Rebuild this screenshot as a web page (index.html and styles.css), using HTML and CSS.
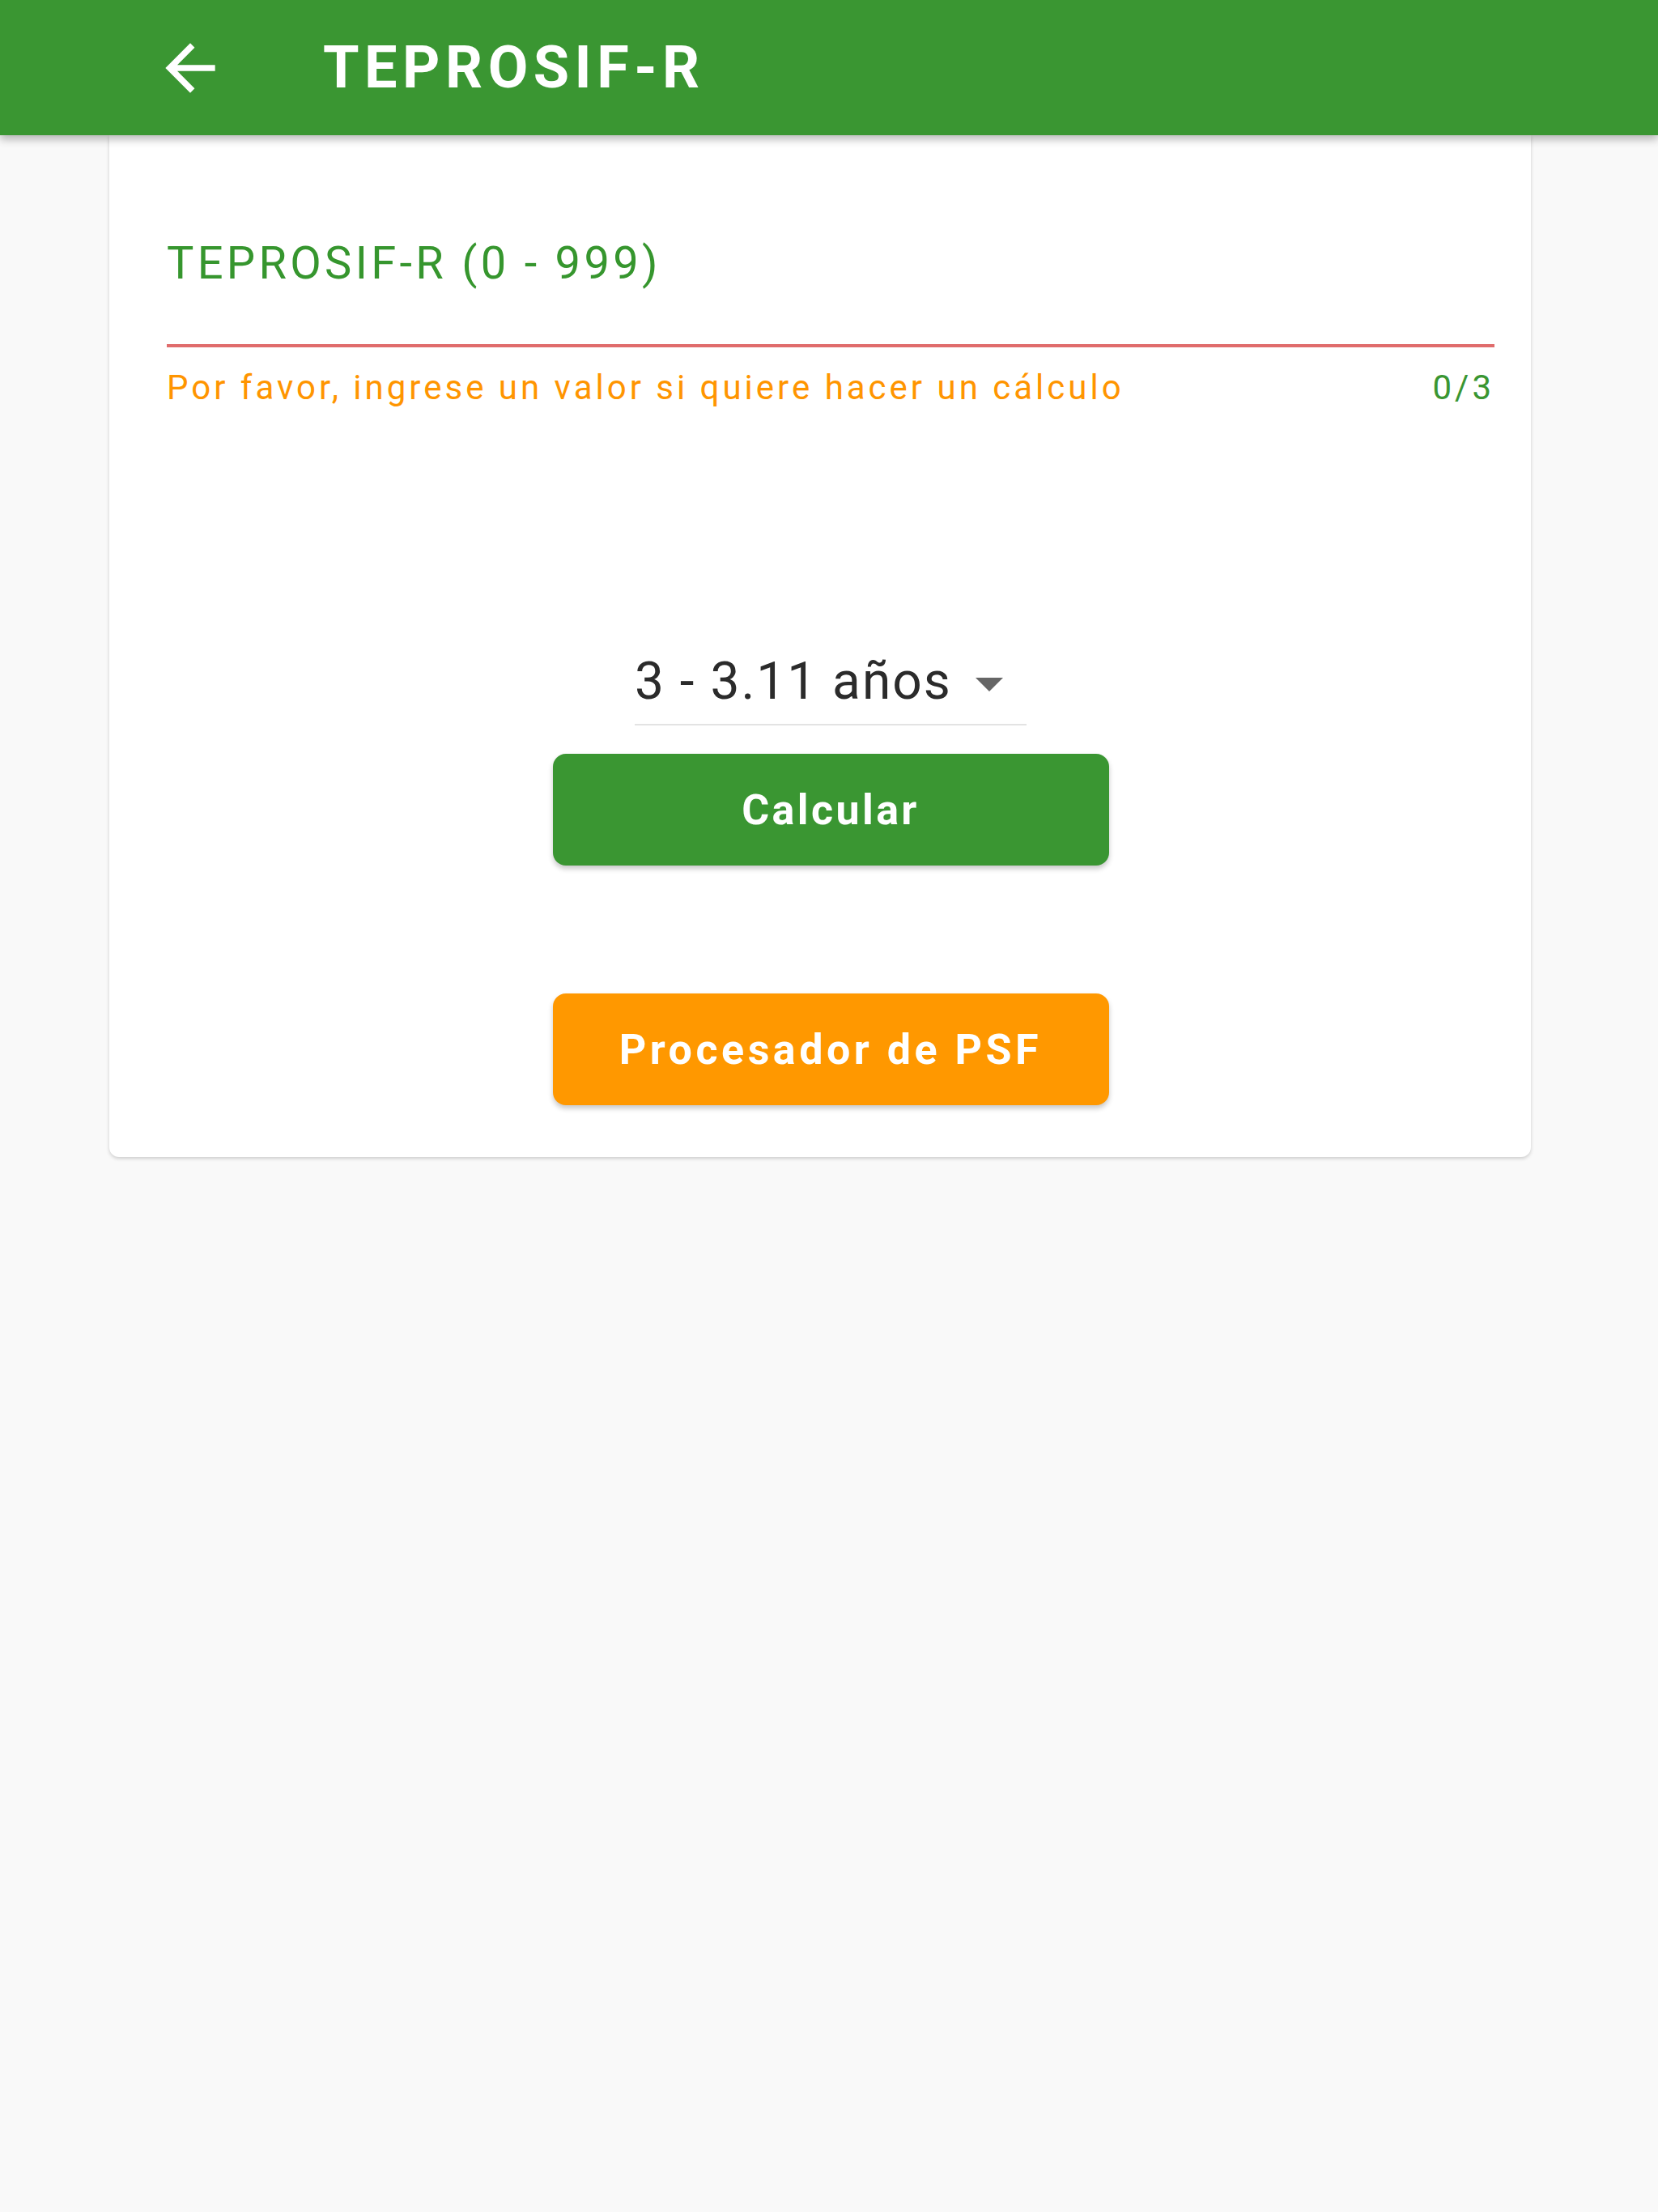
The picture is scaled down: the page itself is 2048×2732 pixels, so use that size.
FILE: index.html
```html
<!DOCTYPE html>
<html lang="es">
<head>
<meta charset="utf-8">
<title>TEPROSIF-R</title>
<link rel="stylesheet" href="styles.css">
</head>
<body>
<header class="appbar">
  <button class="back" aria-label="Volver">
    <svg viewBox="0 0 24 24" width="92" height="92"><path fill="#ffffff" d="M20 11H7.83l5.59-5.59L12 4l-8 8 8 8 1.41-1.41L7.83 13H20v-2z"/></svg>
  </button>
  <h1 class="title">TEPROSIF-R</h1>
</header>
<main class="card">
  <div class="field">
    <label class="field-label">TEPROSIF-R (0 - 999)</label>
    <div class="field-line"></div>
    <div class="field-help">
      <span class="help-text">Por favor, ingrese un valor si quiere hacer un cálculo</span>
      <span class="counter">0/3</span>
    </div>
  </div>
  <div class="actions">
    <div class="select">
      <span class="select-value">3 - 3.11 años</span>
      <span class="select-arrow"></span>
    </div>
    <button class="btn btn-green">Calcular</button>
    <button class="btn btn-orange btn-wide">Procesador de PSF</button>
  </div>
</main>
</body>
</html>
```

FILE: styles.css
```css
* { box-sizing: border-box; }
html, body {
  margin: 0;
  padding: 0;
  background: #f9f9f9;
  font-family: Roboto, "Liberation Sans", Arial, sans-serif;
  width: 2048px;
  min-height: 2732px;
}
.appbar {
  position: relative;
  z-index: 2;
  height: 167px;
  background: #3a9632;
  display: flex;
  align-items: center;
  padding-left: 189px;
  box-shadow: 0 5px 10px rgba(0,0,0,0.28);
}
.back {
  background: none;
  border: 0;
  padding: 0;
  width: 92px;
  height: 92px;
  display: flex;
}
.title {
  margin: 0 0 0 118px;
  color: #ffffff;
  font-weight: 700;
  font-size: 72px;
  line-height: 1;
  letter-spacing: 6.5px;
}
.card {
  position: relative;
  z-index: 1;
  margin-left: 135px;
  width: 1756px;
  background: #ffffff;
  border-radius: 0 0 12px 12px;
  box-shadow: 0 2px 4px rgba(0,0,0,0.18);
  padding: 125px 45px 64px 71px;
}
.field-label {
  display: block;
  color: #36962e;
  font-size: 56px;
  line-height: 67px;
  letter-spacing: 4.3px;
}
.field-line {
  margin-top: 66px;
  height: 4px;
  background: #e06c6c;
}
.field-help {
  margin-top: 25px;
  display: flex;
  justify-content: space-between;
  font-size: 42px;
  line-height: 50px;
  letter-spacing: 4px;
}
.help-text { color: #ff9500; }
.counter { color: #3a9632; }
.actions {
  margin-top: 300px;
  display: flex;
  flex-direction: column;
  align-items: center;
}
.select {
  width: 484px;
  display: flex;
  align-items: center;
  border-bottom: 2px solid #e3e3e3;
  padding-bottom: 14px;
}
.select-value {
  color: #2b2b2b;
  font-size: 64px;
  line-height: 76px;
  letter-spacing: 2px;
}
.select-arrow {
  margin-left: 29px;
  width: 0;
  height: 0;
  border-left: 17px solid transparent;
  border-right: 17px solid transparent;
  border-top: 17px solid #666666;
  margin-top: 6px;
}
.btn {
  width: 687px;
  height: 138px;
  border: 0;
  border-radius: 16px;
  color: #ffffff;
  font-family: Roboto, "Liberation Sans", Arial, sans-serif;
  font-weight: 700;
  font-size: 52px;
  letter-spacing: 3.4px;
  box-shadow: 0 4px 6px rgba(0,0,0,0.22);
}
.btn-wide { letter-spacing: 4.5px; }
.btn-green {
  margin-top: 35px;
  background: #3a9632;
}
.btn-orange {
  margin-top: 158px;
  background: #ff9800;
}
```
